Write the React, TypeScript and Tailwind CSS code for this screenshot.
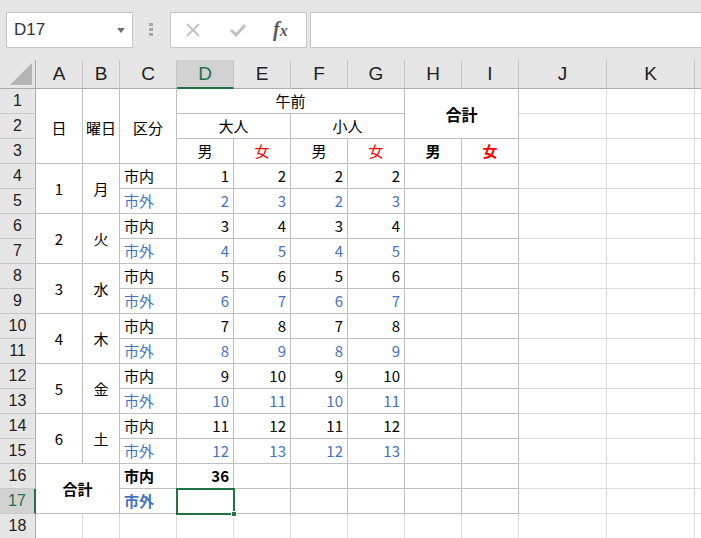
import React from "react";

const base = "p-0 align-middle whitespace-nowrap overflow-hidden text-[15px] leading-[20px]";
const tb = "border-r border-b border-[#bfbfbf]";
const gb = "border-r border-b border-[#dadada]";
const BLUE = "text-[#4472c4]";
const RED = "text-[#ff0000]";

function RH({ n, sel = false }: { n: number; sel?: boolean }) {
  return (
    <td
      className={
        sel
          ? "p-0 align-middle text-center font-['Liberation_Sans',sans-serif] text-[16px] leading-[20px] text-[#217346] bg-[#d2d2d2] border-b border-b-[#c8c8c8] border-r-2 border-r-[#217346]"
          : "p-0 align-middle text-center font-['Liberation_Sans',sans-serif] text-[16px] leading-[20px] text-[#222] bg-[#e6e6e6] border-b border-b-[#c8c8c8] border-r border-r-[#ababab]"
      }
    >
      {n}
    </td>
  );
}

function Grid() {
  return (
    <>
      <td className={`${base} ${gb}`}></td>
      <td className={`${base} ${gb}`}></td>
      <td className={`${base} ${gb}`}></td>
    </>
  );
}

const data: number[][][] = [
  [[1, 2, 2, 2], [2, 3, 2, 3]],
  [[3, 4, 3, 4], [4, 5, 4, 5]],
  [[5, 6, 5, 6], [6, 7, 6, 7]],
  [[7, 8, 7, 8], [8, 9, 8, 9]],
  [[9, 10, 9, 10], [10, 11, 10, 11]],
  [[11, 12, 11, 12], [12, 13, 12, 13]],
];
const days = ["月", "火", "水", "木", "金", "土"];

const cols = ["A", "B", "C", "D", "E", "F", "G", "H", "I", "J", "K", ""];

export default function App() {
  return (
    <div className="w-[701px] h-[538px] overflow-hidden bg-white font-['Noto_Sans_CJK_JP',sans-serif] text-black">
      {/* top bar */}
      <div className="h-[60px] bg-[#e6e6e6] flex items-start pt-[12px] pl-[6px]">
        <div className="w-[127px] h-[36px] bg-white border border-[#c6c6c6] flex items-center justify-between pl-[7px] pr-[7px]">
          <span className="font-['Liberation_Sans',sans-serif] text-[17px] text-[#333]">D17</span>
          <svg width="8" height="5" viewBox="0 0 8 5">
            <path d="M0 0 L8 0 L4 5 Z" fill="#707070" />
          </svg>
        </div>
        <div className="ml-[16px] mt-[11px] flex flex-col gap-[2px]">
          <div className="w-[4px] h-[3px] bg-[#a8a8a8]" />
          <div className="w-[4px] h-[3px] bg-[#a8a8a8]" />
          <div className="w-[4px] h-[3px] bg-[#a8a8a8]" />
        </div>
        <div className="ml-[17px] w-[137px] h-[36px] bg-white border border-[#c6c6c6] flex items-center pl-[14px]">
          <svg width="16" height="16" viewBox="0 0 16 16">
            <path d="M2 2 L14 14 M14 2 L2 14" stroke="#c2c2c2" strokeWidth="1.8" />
          </svg>
          <svg className="ml-[28px]" width="18" height="16" viewBox="0 0 18 16">
            <path d="M2 8 L7 13 L16 3" stroke="#c2c2c2" strokeWidth="3" fill="none" />
          </svg>
          <span className="ml-[26px] font-['Liberation_Serif',serif] italic font-bold text-[20px] leading-[20px] text-[#5a5a5a]">
            f<span className="text-[16px]">x</span>
          </span>
        </div>
        <div className="ml-[3px] flex-1 h-[36px] bg-white border border-r-0 border-[#c6c6c6]" />
      </div>

      {/* sheet */}
      <table className="border-separate border-spacing-0 table-fixed w-[745px]">
        <colgroup>
          <col className="w-[36px]" />
          <col className="w-[47px]" />
          <col className="w-[37px]" />
          <col className="w-[57px]" />
          <col className="w-[57px]" />
          <col className="w-[57px]" />
          <col className="w-[57px]" />
          <col className="w-[57px]" />
          <col className="w-[57px]" />
          <col className="w-[57px]" />
          <col className="w-[88px]" />
          <col className="w-[88px]" />
          <col className="w-[50px]" />
        </colgroup>
        <tbody>
          <tr className="h-[29px]">
            <td className="p-0 relative bg-[#e6e6e6] border-r border-b border-[#ababab]">
              <svg className="absolute right-[3px] bottom-[3px]" width="22" height="22" viewBox="0 0 22 22">
                <path d="M22 0 L22 22 L0 22 Z" fill="#b4b4b4" />
              </svg>
            </td>
            {cols.map((c, idx) =>
              c === "D" ? (
                <td
                  key={idx}
                  className="p-0 align-middle text-center font-['Liberation_Sans',sans-serif] text-[19px] leading-[20px] text-[#217346] bg-[#d2d2d2] border-r border-r-[#c6c6c6] border-b-2 border-b-[#217346]"
                >
                  {c}
                </td>
              ) : (
                <td
                  key={idx}
                  className="p-0 align-middle text-center font-['Liberation_Sans',sans-serif] text-[19px] leading-[20px] text-[#222] bg-[#e6e6e6] border-r border-r-[#c6c6c6] border-b border-b-[#ababab]"
                >
                  {c}
                </td>
              )
            )}
          </tr>

          <tr className="h-[25px]">
            <RH n={1} />
            <td rowSpan={3} className={`${base} ${tb} text-center pt-[3px]`}>日</td>
            <td rowSpan={3} className={`${base} ${tb} text-center pt-[3px]`}>曜日</td>
            <td rowSpan={3} className={`${base} ${tb} text-center pt-[3px]`}>区分</td>
            <td colSpan={4} className={`${base} ${tb} text-center`}>午前</td>
            <td colSpan={2} rowSpan={2} className={`${base} ${tb} text-center font-bold text-[16px]`}>合計</td>
            <Grid />
          </tr>
          <tr className="h-[25px]">
            <RH n={2} />
            <td colSpan={2} className={`${base} ${tb} text-center`}>大人</td>
            <td colSpan={2} className={`${base} ${tb} text-center`}>小人</td>
            <Grid />
          </tr>
          <tr className="h-[25px]">
            <RH n={3} />
            <td className={`${base} ${tb} text-center`}>男</td>
            <td className={`${base} ${tb} text-center ${RED}`}>女</td>
            <td className={`${base} ${tb} text-center`}>男</td>
            <td className={`${base} ${tb} text-center ${RED}`}>女</td>
            <td className={`${base} ${tb} text-center font-bold`}>男</td>
            <td className={`${base} ${tb} text-center font-bold ${RED}`}>女</td>
            <Grid />
          </tr>

          {data.map((pair, i) => (
            <React.Fragment key={i}>
              <tr className="h-[25px]">
                <RH n={4 + i * 2} />
                <td rowSpan={2} className={`${base} ${tb} text-center`}>{i + 1}</td>
                <td rowSpan={2} className={`${base} ${tb} text-center`}>{days[i]}</td>
                <td className={`${base} ${tb} text-left pl-[4px]`}>市内</td>
                {pair[0].map((v, j) => (
                  <td key={j} className={`${base} ${tb} text-right pr-[4px]`}>{v}</td>
                ))}
                <td className={`${base} ${tb}`}></td>
                <td className={`${base} ${tb}`}></td>
                <Grid />
              </tr>
              <tr className="h-[25px]">
                <RH n={5 + i * 2} />
                <td className={`${base} ${tb} text-left pl-[4px] ${BLUE}`}>市外</td>
                {pair[1].map((v, j) => (
                  <td key={j} className={`${base} ${tb} text-right pr-[4px] ${BLUE}`}>{v}</td>
                ))}
                <td className={`${base} ${tb}`}></td>
                <td className={`${base} ${tb}`}></td>
                <Grid />
              </tr>
            </React.Fragment>
          ))}

          <tr className="h-[25px]">
            <RH n={16} />
            <td colSpan={2} rowSpan={2} className={`${base} ${tb} text-center font-bold`}>合計</td>
            <td className={`${base} ${tb} text-left pl-[4px] font-bold`}>市内</td>
            <td className={`${base} ${tb} text-right pr-[4px] font-bold`}>36</td>
            <td className={`${base} ${tb}`}></td>
            <td className={`${base} ${tb}`}></td>
            <td className={`${base} ${tb}`}></td>
            <td className={`${base} ${tb}`}></td>
            <td className={`${base} ${tb}`}></td>
            <Grid />
          </tr>
          <tr className="h-[25px]">
            <RH n={17} sel />
            <td className={`${base} ${tb} text-left pl-[4px] font-bold ${BLUE}`}>市外</td>
            <td className={`p-0 relative overflow-visible ${tb}`}>
              <div className="absolute -left-[1px] -top-[1px] w-[59px] h-[27px] border-2 border-[#217346]" />
              <div className="absolute right-[-4px] bottom-[-4px] w-[6px] h-[6px] bg-[#217346] border border-white" />
            </td>
            <td className={`${base} ${tb}`}></td>
            <td className={`${base} ${tb}`}></td>
            <td className={`${base} ${tb}`}></td>
            <td className={`${base} ${tb}`}></td>
            <td className={`${base} ${tb}`}></td>
            <Grid />
          </tr>
          <tr className="h-[25px]">
            <RH n={18} />
            <td className={`${base} ${gb}`}></td>
            <td className={`${base} ${gb}`}></td>
            <td className={`${base} ${gb}`}></td>
            <td className={`${base} ${gb}`}></td>
            <td className={`${base} ${gb}`}></td>
            <td className={`${base} ${gb}`}></td>
            <td className={`${base} ${gb}`}></td>
            <td className={`${base} ${gb}`}></td>
            <td className={`${base} ${gb}`}></td>
            <Grid />
          </tr>
        </tbody>
      </table>
    </div>
  );
}
